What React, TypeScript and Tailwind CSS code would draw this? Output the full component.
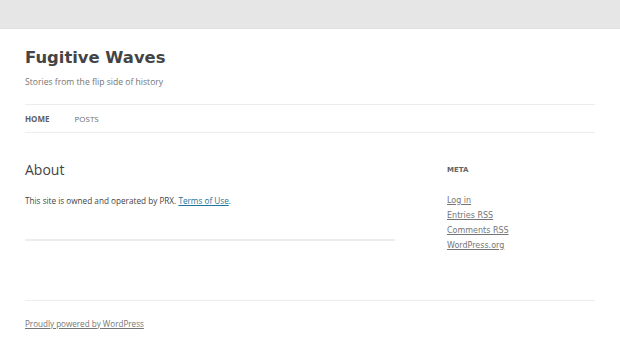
export default function App() {
  return (
    <div className="min-h-[343px] bg-white" style={{ fontFamily: '"Open Sans", sans-serif' }}>
      <div className="h-[29px] bg-[#e6e6e6] border-b border-[#e0e0e0]" />
      <div className="px-[25px] w-[620px]">
        <header className="pt-[18px]">
          <h1 className="text-[16.4px] leading-[22px] font-bold text-[#444]" style={{ fontFamily: '"DejaVu Sans", sans-serif' }}>
            Fugitive Waves
          </h1>
          <p className="mt-[7px] text-[8.6px] leading-[12px] text-[#757575]">Stories from the flip side of history</p>
          <nav className="mt-[16px] w-[570px] border-t border-b border-[#ededed] h-[29px] flex items-center gap-[25px] text-[8px] uppercase">
            <span className="font-bold text-[#5e5e5e]">Home</span>
            <span className="text-[#6a6a6a]">Posts</span>
          </nav>
        </header>
        <div className="flex w-[570px] mt-[27px]">
          <main className="w-[370px]">
            <h2 className="text-[14px] leading-[20px] text-[#444]">About</h2>
            <p className="mt-[14px] text-[8.2px] leading-[14px] text-[#444]">
              This site is owned and operated by PRX.{" "}
              <a className="text-[#21759b] underline">Terms of Use</a>.
            </p>
            <div className="mt-[31px] h-[2px] bg-[#ededed]" />
          </main>
          <aside className="ml-[52px] pt-[5px]">
            <h3 className="text-[7px] font-bold uppercase text-[#636363]" style={{ fontFamily: '"DejaVu Sans", sans-serif' }}>Meta</h3>
            <ul className="mt-[17px] text-[8px] leading-[15px] text-[#757575]" style={{ fontFamily: '"DejaVu Sans", sans-serif' }}>
              <li><a className="underline">Log in</a></li>
              <li><a className="underline">Entries RSS</a></li>
              <li><a className="underline">Comments RSS</a></li>
              <li><a className="underline">WordPress.org</a></li>
            </ul>
          </aside>
        </div>
        <footer className="mt-[47px] w-[570px] border-t border-[#ededed] pt-[8px] pb-[14px]">
          <a className="text-[8.1px] leading-[12px] text-[#757575] underline">Proudly powered by WordPress</a>
        </footer>
      </div>
    </div>
  );
}
